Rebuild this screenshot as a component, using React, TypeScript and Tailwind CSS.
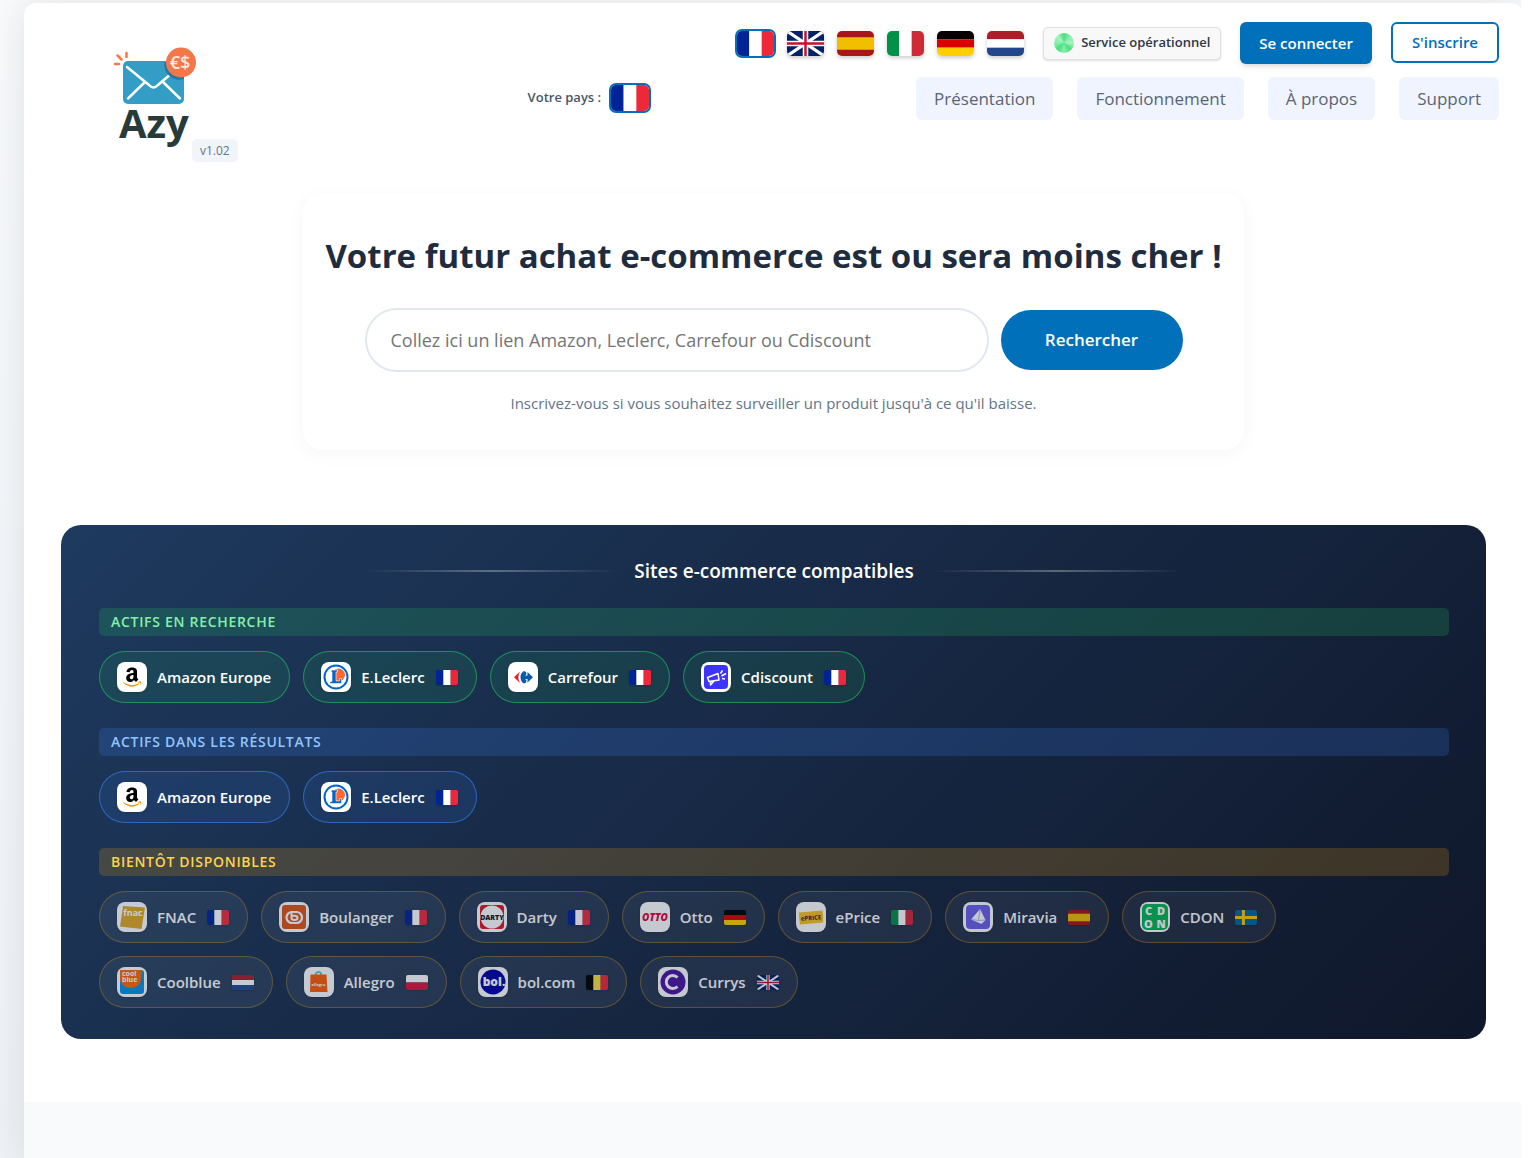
import type { ReactNode } from "react";
import { FaAmazon } from "react-icons/fa";

type Country = "fr" | "gb" | "es" | "it" | "de" | "nl" | "be" | "pl" | "se";

type Shop = {
  name: string;
  logo: ReactNode;
  country?: Country;
};

const verticalFlags: Partial<Record<Country, string[]>> = {
  fr: ["#002395", "#ffffff", "#ed2939"],
  it: ["#009246", "#ffffff", "#ce2b37"],
  be: ["#000000", "#fae042", "#ed2939"],
};

const horizontalFlags: Partial<Record<Country, string[]>> = {
  de: ["#000000", "#dd0000", "#ffce00"],
  nl: ["#ae1c28", "#ffffff", "#21468b"],
};

function Flag({ country, className }: { country: Country; className: string }) {
  return (
    <svg
      viewBox="0 0 60 40"
      preserveAspectRatio="none"
      className={className}
      aria-hidden="true"
    >
      {verticalFlags[country]?.map((color, i) => (
        <rect key={color} x={i * 20} width="20" height="40" fill={color} />
      ))}
      {horizontalFlags[country]?.map((color, i) => (
        <rect key={color} y={i * 13.33} width="60" height="13.4" fill={color} />
      ))}
      {country === "es" && (
        <>
          <rect width="60" height="40" fill="#aa151b" />
          <rect y="10" width="60" height="20" fill="#f1bf00" />
        </>
      )}
      {country === "pl" && (
        <>
          <rect width="60" height="20" fill="#ffffff" />
          <rect y="20" width="60" height="20" fill="#dc143c" />
        </>
      )}
      {country === "se" && (
        <>
          <rect width="60" height="40" fill="#006aa7" />
          <path d="M0 20H60M23 0V40" stroke="#fecc00" strokeWidth="8" />
        </>
      )}
      {country === "gb" && (
        <>
          <rect width="60" height="40" fill="#012169" />
          <path d="M0 0L60 40M60 0L0 40" stroke="#ffffff" strokeWidth="5" />
          <path d="M30 0V40M0 20H60" stroke="#ffffff" strokeWidth="9" />
          <path d="M30 0V40M0 20H60" stroke="#c8102e" strokeWidth="4" />
        </>
      )}
    </svg>
  );
}

function Logo() {
  return (
    <svg
      viewBox="114 47 78 115"
      className="h-[115px] w-[78px] overflow-visible"
      role="img"
      aria-label="Azy"
    >
      <rect x="123" y="61" width="61" height="43" rx="5" fill="#339dc5" />
      <path
        d="M127 67L149 85Q153.500 90 158 85L179 67M145 82L128 98.500M163 82L180 98.500"
        fill="none"
        stroke="#ffffff"
        strokeWidth="2.500"
        strokeLinecap="round"
      />
      <path
        d="M164.500 62A15 15 0 0 0 184 79V66Z"
        fill="#1f7aa6"
      />
      <circle cx="181" cy="62.500" r="15" fill="#f37748" />
      <text
        x="180"
        y="69"
        textAnchor="middle"
        fontSize="18"
        fontWeight="600"
        fill="#ffeadd"
      >
        €$
      </text>
      <path
        d="M126.500 53V57M117.500 55.500L121.500 59.500M115 64H119"
        stroke="#f37748"
        strokeWidth="2.500"
        strokeLinecap="round"
      />
      <text x="119" y="138" fontSize="40" fontWeight="700" fill="#273b3b">
        Azy
      </text>
    </svg>
  );
}

function ShopLogo({ children }: { children: ReactNode }) {
  return (
    <svg viewBox="0 0 30 30" className="size-full" aria-hidden="true">
      {children}
    </svg>
  );
}

const amazon = (
  <FaAmazon className="size-[22px]" fill="url(#amazon-fill)" aria-hidden="true" />
);

const leclerc = (
  <ShopLogo>
    <circle cx="15" cy="15" r="11.500" fill="#ffffff" stroke="#0066cc" strokeWidth="2" />
    <circle cx="17.500" cy="13" r="6.500" fill="#ff6633" />
    <path
      d="M10.500 8H16.500V10H15V19H18.500V16.500H20.500V21.500H9V19.500H11V10H10Z"
      fill="#0066cc"
      stroke="#ffffff"
      strokeWidth="0.600"
    />
  </ShopLogo>
);

const carrefour = (
  <ShopLogo>
    <path d="M12 9.500Q9.500 12 6 15.200Q9.500 18.500 12 21Q10.300 18 10.300 15.200Q10.300 12.500 12 9.500Z" fill="#e3202c" />
    <path
      d="M16 9Q12.500 11 12.500 15.200Q12.500 19.500 16 21.500Q18.500 21 18.500 19Q18.500 17.500 17 17H19.500V20.500L25 15.200L19.500 10V13.500H17Q18.500 13 18.500 11.500Q18.500 9.500 16 9Z"
      fill="#0a5ba8"
    />
  </ShopLogo>
);

const cdiscount = (
  <ShopLogo>
    <rect x="3" y="3" width="24" height="24" rx="4" fill="#3d34ff" />
    <path
      d="M6.500 15.500L17 11.500L18 18L8 19.500ZM9.500 19.500L9.500 23L13 19M19.500 11.500L21.500 8.500M20.500 14L25 11.500M21 16.500L24 17"
      fill="none"
      stroke="#ffffff"
      strokeWidth="1.500"
      strokeLinejoin="round"
    />
  </ShopLogo>
);

const fnac = (
  <ShopLogo>
    <path d="M6 4L28 5.500L24.500 27L3 24.500Z" fill="#e0a51c" />
    <text x="16" y="14" textAnchor="middle" fontSize="9" fontWeight="700" fill="#ffffff">
      fnac
    </text>
  </ShopLogo>
);

const boulanger = (
  <ShopLogo>
    <rect x="3" y="3" width="24" height="24" rx="3" fill="#dd5213" />
    <rect x="7.500" y="10" width="15.500" height="11" rx="5.500" fill="none" stroke="#ffffff" strokeWidth="2.200" />
    <path d="M12.500 9V16Q12.500 18 15.500 18Q18.500 18 18.500 16Q18.500 13.800 15.500 13.800H13" fill="none" stroke="#ffffff" strokeWidth="2" />
  </ShopLogo>
);

const darty = (
  <ShopLogo>
    <rect x="3" y="3" width="24" height="24" rx="3" fill="#e4141f" />
    <circle cx="15" cy="15" r="11.500" fill="#ffffff" />
    <text x="15" y="17.500" textAnchor="middle" fontSize="7" fontWeight="800" fill="#111111">
      DARTY
    </text>
  </ShopLogo>
);

const otto = (
  <ShopLogo>
    <text x="15" y="19" textAnchor="middle" fontSize="10" fontWeight="800" fontStyle="italic" fill="#e4003a">
      OTTO
    </text>
  </ShopLogo>
);

const eprice = (
  <ShopLogo>
    <path d="M3 10.500L26.500 8.500Q27.500 15 27 20.500L4 22.500Q3 16 3 10.500Z" fill="#fbc11b" />
    <text x="15" y="18" textAnchor="middle" fontSize="6" fontWeight="700" fill="#222222" transform="rotate(-4 15 15)">
      ePRICE
    </text>
  </ShopLogo>
);

const miravia = (
  <ShopLogo>
    <rect x="3" y="3" width="24" height="24" rx="4" fill="#6b5fec" />
    <path d="M17 7L22.500 18L18.500 22L8 17.500Z" fill="#ffffff" />
    <path d="M17 7L15.500 18.500L8 17.500M15.500 18.500L22.500 18" fill="none" stroke="#a9a0f5" strokeWidth="0.800" />
  </ShopLogo>
);

const cdon = (
  <ShopLogo>
    <rect x="2" y="2" width="26" height="26" rx="5" fill="#00b956" />
    <g fontSize="11" fontWeight="800" fill="#ffffff" textAnchor="middle">
      <text x="8.500" y="13">C</text>
      <text x="21" y="13">D</text>
      <text x="8.500" y="26">O</text>
      <text x="21" y="26">N</text>
    </g>
  </ShopLogo>
);

const coolblue = (
  <ShopLogo>
    <rect x="3" y="3" width="24" height="24" rx="3" fill="#0090e3" />
    <path d="M3 3H24.500Q26 21 13 21Q5 20.500 3 13Z" fill="#ff6600" />
    <text fontSize="7" fontWeight="700" fill="#ffffff">
      <tspan x="5" y="9">cool</tspan>
      <tspan x="5" y="15">blue</tspan>
    </text>
  </ShopLogo>
);

const allegro = (
  <ShopLogo>
    <path d="M11.500 9Q11.500 5 14.500 5Q17.500 5 17.500 9" fill="none" stroke="#41b8a5" strokeWidth="1.500" />
    <path d="M6.500 7.500H22.500L23.500 25H6Z" fill="#ff5a00" />
    <text x="14.500" y="19" textAnchor="middle" fontSize="4" fontWeight="700" fill="#ffffff">
      allegro
    </text>
  </ShopLogo>
);

const bol = (
  <ShopLogo>
    <circle cx="15" cy="15" r="12.500" fill="#0000a4" />
    <text x="16" y="18.500" textAnchor="middle" fontSize="12" fontWeight="800" fill="#ffffff">
      bol.
    </text>
  </ShopLogo>
);

const currys = (
  <ShopLogo>
    <circle cx="15" cy="15" r="12.500" fill="#4c12a1" />
    <path d="M19.500 10.500A6.500 6.500 0 1 0 19.500 19.500" fill="none" stroke="#ffffff" strokeWidth="3" />
  </ShopLogo>
);

const searchShops: Shop[] = [
  { name: "Amazon Europe", logo: amazon },
  { name: "E.Leclerc", logo: leclerc, country: "fr" },
  { name: "Carrefour", logo: carrefour, country: "fr" },
  { name: "Cdiscount", logo: cdiscount, country: "fr" },
];

const resultShops: Shop[] = searchShops.slice(0, 2);

const upcomingShops: Shop[] = [
  { name: "FNAC", logo: fnac, country: "fr" },
  { name: "Boulanger", logo: boulanger, country: "fr" },
  { name: "Darty", logo: darty, country: "fr" },
  { name: "Otto", logo: otto, country: "de" },
  { name: "ePrice", logo: eprice, country: "it" },
  { name: "Miravia", logo: miravia, country: "es" },
  { name: "CDON", logo: cdon, country: "se" },
  { name: "Coolblue", logo: coolblue, country: "nl" },
  { name: "Allegro", logo: allegro, country: "pl" },
  { name: "bol.com", logo: bol, country: "be" },
  { name: "Currys", logo: currys, country: "gb" },
];

function ShopGroup({
  title,
  titleClass,
  chipClass,
  shops,
}: {
  title: string;
  titleClass: string;
  chipClass: string;
  shops: Shop[];
}) {
  return (
    <section>
      <h3
        className={`rounded-[5px] px-3 text-[14px] leading-7 font-semibold tracking-wider uppercase ${titleClass}`}
      >
        {title}
      </h3>
      <ul className="mt-[15px] flex flex-wrap gap-[13px]">
        {shops.map((shop) => (
          <li
            key={shop.name}
            className={`flex h-[52px] items-center rounded-full border pr-[18px] pl-[17px] ${chipClass}`}
          >
            <span className="flex size-[30px] items-center justify-center rounded-lg bg-white shadow">
              {shop.logo}
            </span>
            <span className="ml-[10px] text-[15px] font-semibold text-white">
              {shop.name}
            </span>
            {shop.country && (
              <Flag
                country={shop.country}
                className="ml-[11px] h-[15px] w-[22px] rounded-[2px] shadow"
              />
            )}
          </li>
        ))}
      </ul>
    </section>
  );
}

const languages: { code: Country; label: string }[] = [
  { code: "fr", label: "Français" },
  { code: "gb", label: "English" },
  { code: "es", label: "Español" },
  { code: "it", label: "Italiano" },
  { code: "de", label: "Deutsch" },
  { code: "nl", label: "Nederlands" },
];

const navLinks = ["Présentation", "Fonctionnement", "À propos", "Support"];

function Header() {
  return (
    <header className="flex items-start pt-[19px] pr-6 pl-[90px]">
      <div className="flex items-end pt-[25px]">
        <Logo />
        <span className="rounded-[5px] bg-[#f1f5f9] px-2 text-xs leading-[23px] font-medium text-[#64748b]">
          v1.02
        </span>
      </div>

      <div className="mt-[61px] ml-auto flex items-center gap-2">
        <span className="text-[13px] font-semibold text-[#4a5568]">
          Votre pays :
        </span>
        <button
          type="button"
          aria-label="France"
          className="rounded-[7px] border-2 border-[#0070bb]"
        >
          <Flag country="fr" className="h-[26px] w-[38px] rounded-[5px]" />
        </button>
      </div>

      <div className="ml-[86px] flex flex-col items-end gap-[13px]">
        <div className="flex items-center gap-[19px]">
          <div className="flex gap-[13px]">
            {languages.map(({ code, label }) => (
              <button
                key={code}
                type="button"
                aria-label={label}
                className={`rounded-[5px] ${
                  code === "fr"
                    ? "ring-2 ring-[#0070bb]"
                    : "shadow-[0_2px_4px_rgba(0,0,0,0.2)]"
                }`}
              >
                <Flag country={code} className="h-[25px] w-[37px] rounded-[5px]" />
              </button>
            ))}
          </div>
          <div className="flex h-[33px] items-center gap-[7px] rounded-[5px] border border-[#e0e0e0] bg-[#f8f8f8] px-[10px] shadow-sm">
            <span className="size-5 rounded-full bg-[conic-gradient(#4ade80,#86efac,#a7f3c0,#4ade80,#86efac,#4ade80,#86efac,#a7f3c0,#4ade80)]" />
            <span className="text-[13px] font-semibold text-[#2d3748]">
              Service opérationnel
            </span>
          </div>
          <button
            type="button"
            className="h-[42px] rounded-md bg-[#0070bb] px-[19px] text-[15px] font-semibold text-white shadow-md"
          >
            Se connecter
          </button>
          <button
            type="button"
            className="h-[41px] self-start rounded-md border-2 border-[#0070bb] px-[19px] text-[15px] font-semibold text-[#0070bb]"
          >
            S'inscrire
          </button>
        </div>
        <nav className="flex gap-6">
          {navLinks.map((link) => (
            <a
              key={link}
              href="#"
              className="rounded-md bg-[#f0f4ff] px-[18px] text-[17px] leading-[43px] text-[#5a6575]"
            >
              {link}
            </a>
          ))}
        </nav>
      </div>
    </header>
  );
}

function SearchCard() {
  return (
    <section className="mx-auto mt-[31px] w-full max-w-[941px] rounded-[20px] bg-white px-5 pt-[38px] pb-[35px] text-center shadow-[0_4px_20px_rgba(0,0,0,0.04)]">
      <h1 className="text-[33px] leading-[50px] font-bold text-[#1e2c3e]">
        Votre futur achat e-commerce est ou sera moins cher !
      </h1>
      <form className="mx-auto mt-[27px] flex max-w-[818px] items-center gap-3">
        <input
          type="text"
          aria-label="Lien du produit"
          placeholder="Collez ici un lien Amazon, Leclerc, Carrefour ou Cdiscount"
          className="h-16 min-w-0 flex-1 rounded-full border-2 border-[#e2e8f0] px-6 text-[18px] placeholder:text-[#757575]"
        />
        <button
          type="button"
          className="h-[60px] w-[182px] rounded-full bg-[#0070bb] text-[17px] font-semibold text-white"
        >
          Rechercher
        </button>
      </form>
      <p className="mt-5 text-[15px] leading-[23px] text-[#64748b]">
        Inscrivez-vous si vous souhaitez surveiller un produit jusqu'à ce qu'il
        baisse.
      </p>
    </section>
  );
}

export default function App() {
  return (
    <div className="min-h-screen overflow-hidden bg-white pr-[15px] font-['Open_Sans','Noto_Sans',sans-serif]">
      {/* Shared fill: black letter, orange smile */}
      <svg className="absolute size-0" aria-hidden="true">
        <linearGradient id="amazon-fill" x1="0" y1="0" x2="0" y2="1">
          <stop offset="0.753" stopColor="#000000" />
          <stop offset="0.753" stopColor="#ff9900" />
        </linearGradient>
      </svg>

      <div className="min-h-screen overflow-hidden bg-linear-to-b from-[#f8fafc] to-[#eef2f7] pt-[3px] pl-6">
        <main className="-mr-[2px] flex min-h-screen flex-col rounded-t-xl bg-white shadow-[0_0_40px_rgba(0,0,0,0.1)]">
          <Header />
          <SearchCard />

          <section className="mx-[37px] mt-[75px] rounded-[20px] bg-linear-135 from-[#1e3a5f] to-[#0f172a] pt-8 pr-[37px] pb-[31px] pl-[38px]">
            <div className="mb-[23px] flex items-center justify-center gap-[18px]">
              <span className="h-[2px] w-[250px] bg-linear-to-r from-transparent via-white/30 to-transparent" />
              <h2 className="text-[19px] leading-7 font-semibold text-white">
                Sites e-commerce compatibles
              </h2>
              <span className="h-[2px] w-[250px] bg-linear-to-r from-transparent via-white/30 to-transparent" />
            </div>
            <div className="flex flex-col gap-[25px]">
              <ShopGroup
                title="Actifs en recherche"
                titleClass="bg-[#22c55e]/20 text-[#86efac]"
                chipClass="border-[#22c55e]/60 bg-[#22c55e]/12"
                shops={searchShops}
              />
              <ShopGroup
                title="Actifs dans les résultats"
                titleClass="bg-[#3b82f6]/20 text-[#93c5fd]"
                chipClass="border-[#3b82f6]/60 bg-[#3b82f6]/12"
                shops={resultShops}
              />
              <ShopGroup
                title="Bientôt disponibles"
                titleClass="bg-[#f59e0b]/20 text-[#fcd34d]"
                chipClass="border-[#f59e0b]/40 bg-white/8 opacity-75"
                shops={upcomingShops}
              />
            </div>
          </section>

          <div className="mt-[63px] flex-1 bg-[#f8fafc]" />
        </main>
      </div>
    </div>
  );
}
